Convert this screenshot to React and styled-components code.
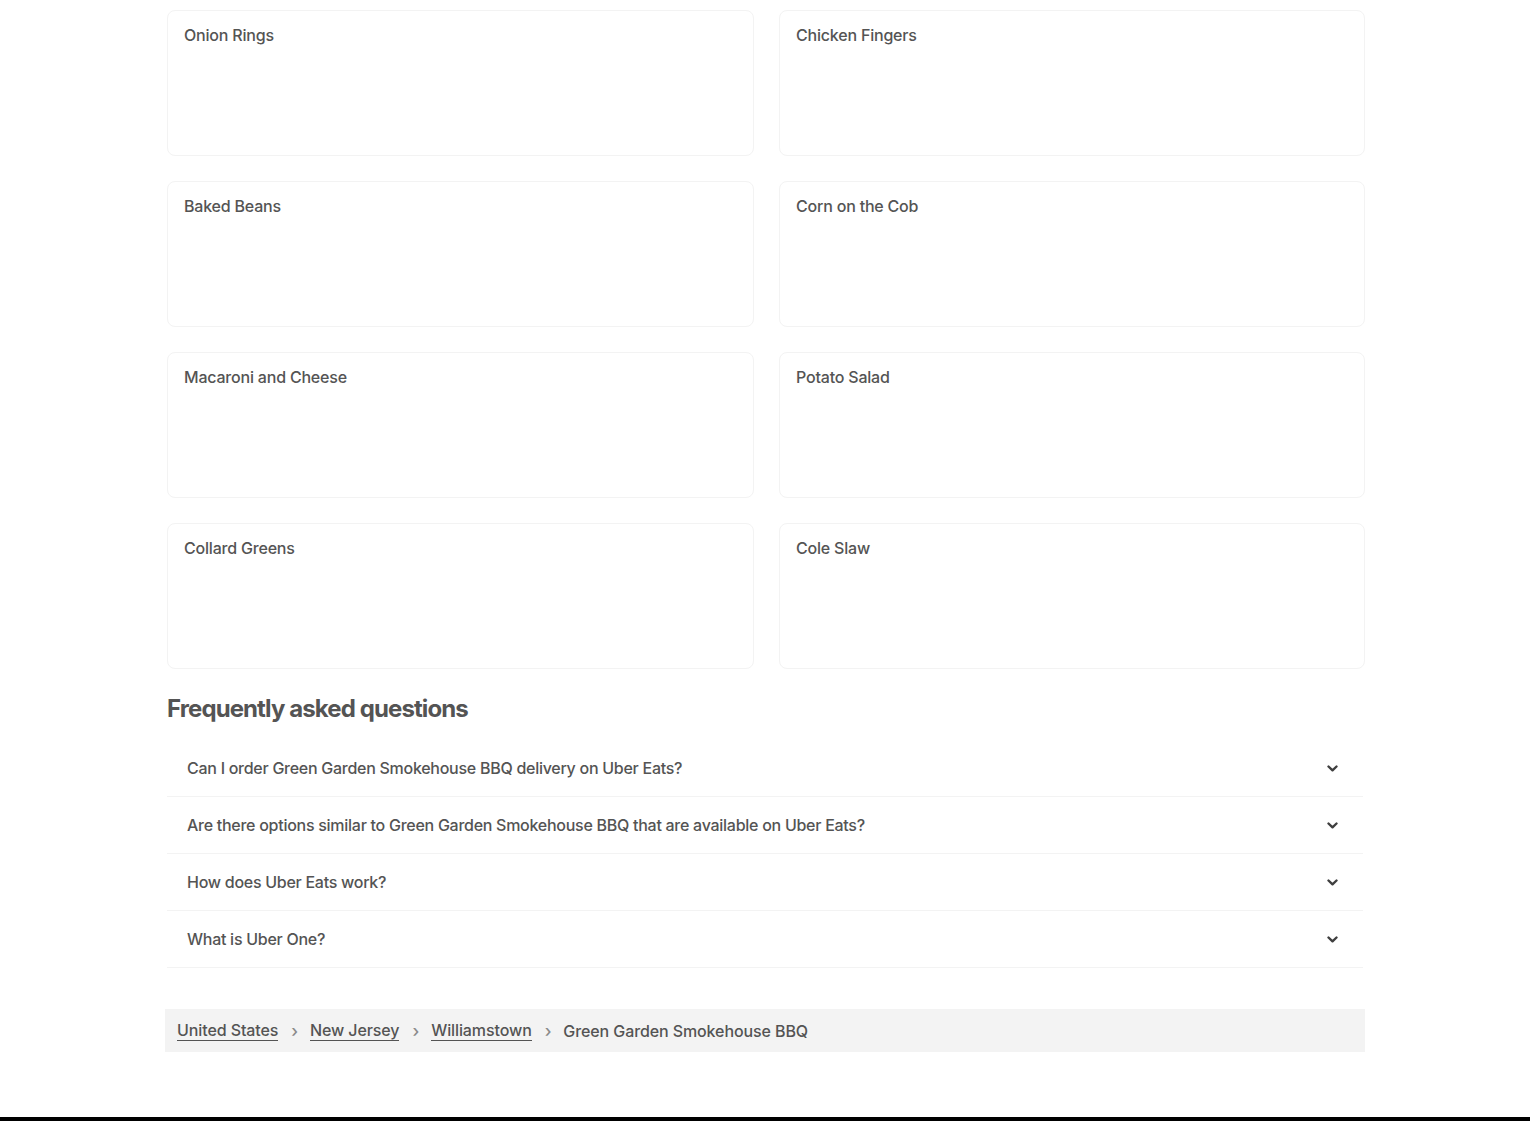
import React from "react";
import styled, { createGlobalStyle } from "styled-components";

const Global = createGlobalStyle`
  html, body { margin: 0; padding: 0; background: #fff; }
  body { font-family: Inter, "Noto Sans", sans-serif; color: #545454; }
`;

const Page = styled.div`
  min-height: 1121px;
  display: flex;
  flex-direction: column;
`;

const Container = styled.main`
  width: 1200px;
  margin: 0 auto;
  padding-top: 10px;
  flex: 1;
`;

const Grid = styled.div`
  display: grid;
  grid-template-columns: 587px 586px;
  column-gap: 25px;
  row-gap: 25px;
  padding: 0 2px;
`;

const Card = styled.div`
  height: 146px;
  box-sizing: border-box;
  border: 1px solid #f3f3f3;
  border-radius: 8px;
  padding: 14px 16px;
`;

const CardTitle = styled.div`
  font-size: 16px;
  line-height: 20px;
  font-weight: 500;
  letter-spacing: -0.2px;
  color: #545454;
`;

const Heading = styled.h2`
  margin: 24px 0 0 2px;
  font-size: 24px;
  line-height: 32px;
  font-weight: 700;
  letter-spacing: -0.9px;
  color: #545454;
`;

const FaqList = styled.div`
  margin-top: 15px;
  padding: 0 2px;
`;

const FaqRow = styled.button`
  width: 100%;
  height: 57px;
  display: flex;
  align-items: center;
  justify-content: space-between;
  box-sizing: border-box;
  padding: 0 25px 0 20px;
  background: transparent;
  border: none;
  border-bottom: 1px solid #f3f3f3;
  font-family: inherit;
  font-size: 16px;
  font-weight: 500;
  letter-spacing: -0.27px;
  color: #545454;
  text-align: left;
  cursor: pointer;
`;

const Chevron = () => (
  <svg width="11" height="7" viewBox="0 0 11 7" aria-hidden="true">
    <path d="M1.5 1.5 L5.5 5.3 L9.5 1.5" fill="none" stroke="#3f3f3f" strokeWidth="2.4" strokeLinecap="round" strokeLinejoin="round" />
  </svg>
);

const Crumbs = styled.nav`
  margin-top: 41px;
  height: 43px;
  background: #f3f3f3;
  display: flex;
  align-items: center;
  padding: 0 12px;
  font-size: 16px;
  font-weight: 500;
  letter-spacing: -0.1px;
`;

const CrumbLink = styled.a`
  color: #545454;
  text-decoration: none;
  border-bottom: 1px solid #545454;
  line-height: 20px;
`;

const Sep = styled.span`
  margin: 0 12px 0 13px;
  color: #8a8a8a;
  font-size: 17px;
`;

const Current = styled.span`
  color: #545454;
`;

const Footer = styled.footer`
  height: 4px;
  margin-top: 65px;
  background: #000;
`;

const items = [
  "Onion Rings", "Chicken Fingers",
  "Baked Beans", "Corn on the Cob",
  "Macaroni and Cheese", "Potato Salad",
  "Collard Greens", "Cole Slaw",
];

const faqs = [
  "Can I order Green Garden Smokehouse BBQ delivery on Uber Eats?",
  "Are there options similar to Green Garden Smokehouse BBQ that are available on Uber Eats?",
  "How does Uber Eats work?",
  "What is Uber One?",
];

export default function App() {
  return (
    <Page>
      <Global />
      <Container>
        <Grid>
          {items.map((t) => (
            <Card key={t}><CardTitle>{t}</CardTitle></Card>
          ))}
        </Grid>
        <Heading>Frequently asked questions</Heading>
        <FaqList>
          {faqs.map((q) => (
            <FaqRow key={q}>
              <span>{q}</span>
              <Chevron />
            </FaqRow>
          ))}
        </FaqList>
        <Crumbs>
          <CrumbLink href="#">United States</CrumbLink>
          <Sep>›</Sep>
          <CrumbLink href="#">New Jersey</CrumbLink>
          <Sep>›</Sep>
          <CrumbLink href="#">Williamstown</CrumbLink>
          <Sep>›</Sep>
          <Current>Green Garden Smokehouse BBQ</Current>
        </Crumbs>
      </Container>
      <Footer />
    </Page>
  );
}
